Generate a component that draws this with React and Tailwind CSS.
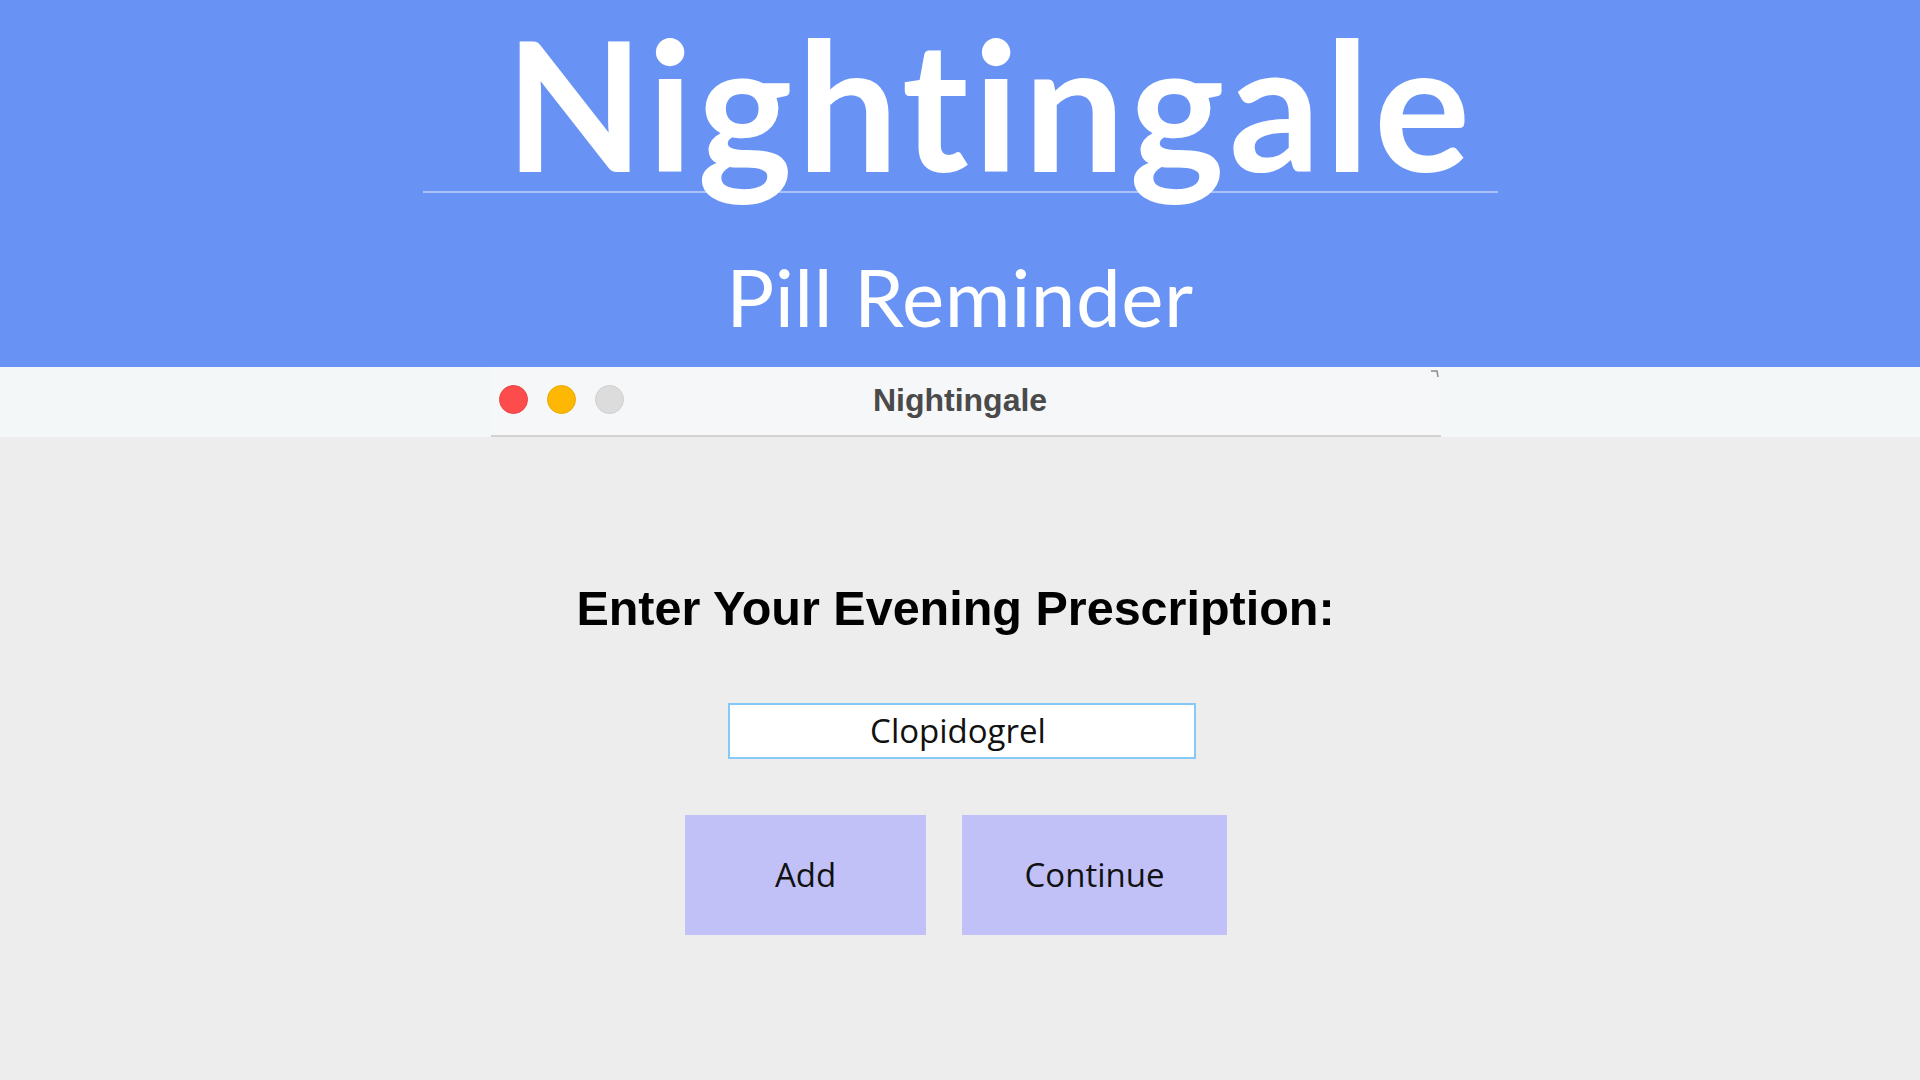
import React from 'react'

const TrafficLights = () => (
  <div className="flex items-center gap-[19px] pl-[8px]">
    <span className="w-[29px] h-[29px] rounded-full bg-[#fe4b4b] border border-[#e84444]" />
    <span className="w-[29px] h-[29px] rounded-full bg-[#feb803] border border-[#eaa900]" />
    <span className="w-[29px] h-[29px] rounded-full bg-[#dcdcdc] border border-[#cfcfcf]" />
  </div>
)

const App = () => {
  return (
    <div className="w-[1920px] h-[1080px] flex flex-col bg-[#ededed] overflow-hidden">
      {/* banner */}
      <header className="h-[367px] bg-[#6893f4] flex flex-col items-center">
        <div className="w-[1075px] flex justify-center bg-[linear-gradient(#a9c2f8,#a9c2f8)] bg-no-repeat bg-[length:100%_2px] bg-[position:0_191px]">
          <h1 className="pl-[60px] text-[180px] leading-[205px] font-bold text-white font-['Lato','Noto_Sans',sans-serif] tracking-[4.5px]">
            Nightingale
          </h1>
        </div>
        <p className="mt-[51px] text-[80px] leading-none font-normal text-white font-['Lato','Noto_Sans',sans-serif] tracking-[0.5px]">
          Pill Reminder
        </p>
      </header>

      {/* window title bar */}
      <div className="h-[70px] bg-[#f4f7f8] flex justify-center pl-[12px]">
        <div className="relative w-[950px] h-full bg-[#f5f7f9] border-b-2 border-[#d3d3d3] flex items-center pb-[3px]">
          <TrafficLights />
          <span className="absolute left-0 right-[12px] text-center text-[32px] leading-[40px] font-bold text-[#4a4a4a] font-['Liberation_Sans',Arial,sans-serif] pointer-events-none">
            Nightingale
          </span>
          <svg className="absolute right-[2px] top-[3px]" width="8" height="8" viewBox="0 0 8 8">
            <path d="M0 1 L6 1 L7 7" stroke="#8a8a8a" strokeWidth="1.5" fill="none" />
          </svg>
        </div>
      </div>

      {/* form */}
      <main className="flex-1 flex flex-col items-center">
        <h2 className="mt-[144px] mr-[9px] text-[48.5px] leading-[55px] font-bold text-black font-['Liberation_Sans',Arial,sans-serif]">
          Enter Your Evening Prescription:
        </h2>
        <div className="mt-[67px] ml-[4px] w-[468px] h-[56px] bg-white border-2 border-[#86c8f6] flex items-center justify-center pr-[8px]">
          <span className="text-[33px] text-[#111] font-['Open_Sans','Noto_Sans',sans-serif]">Clopidogrel</span>
        </div>
        <div className="mt-[56px] mr-[8px] flex gap-[36px]">
          <button className="w-[241px] h-[120px] bg-[#c1c1f8] text-[33px] text-[#111] font-['Open_Sans','Noto_Sans',sans-serif]">
            Add
          </button>
          <button className="w-[265px] h-[120px] bg-[#c1c1f8] text-[33px] text-[#111] font-['Open_Sans','Noto_Sans',sans-serif]">
            Continue
          </button>
        </div>
      </main>
    </div>
  )
}

export default App
